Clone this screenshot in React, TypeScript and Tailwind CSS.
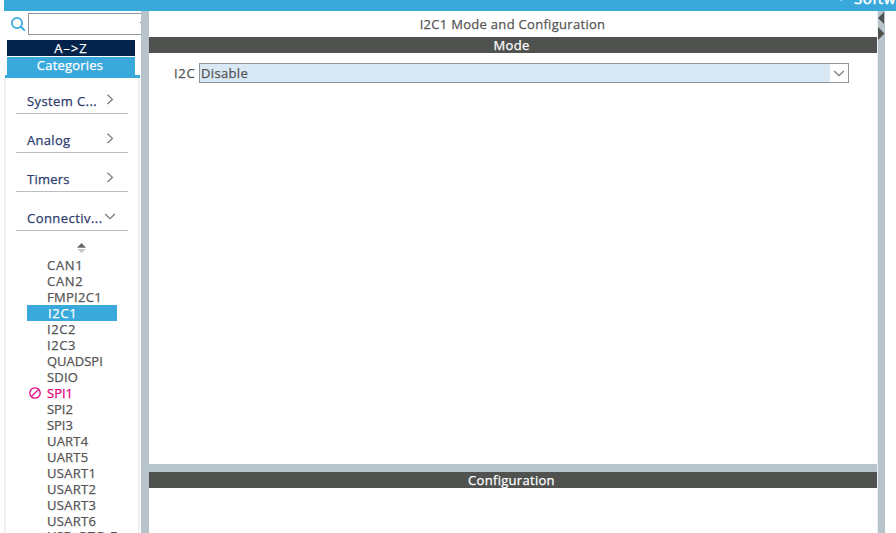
const categories = [
  { name: 'System C...', open: false, track: 'tracking-[0.4px]' },
  { name: 'Analog', open: false, track: 'tracking-[0.3px]' },
  { name: 'Timers', open: false, track: 'tracking-[0.25px]' },
  { name: 'Connectiv...', open: true, track: 'tracking-[0.45px]' },
];

const peripherals = [
  { name: 'CAN1', track: 'tracking-[0.7px]' },
  { name: 'CAN2', track: 'tracking-[0.7px]' },
  { name: 'FMPI2C1', track: 'tracking-[0.3px]' },
  { name: 'I2C1', track: 'tracking-[0.7px]' },
  { name: 'I2C2', track: 'tracking-[0.6px]' },
  { name: 'I2C3', track: 'tracking-[0.6px]' },
  { name: 'QUADSPI', track: 'tracking-[0px]' },
  { name: 'SDIO', track: 'tracking-[0.2px]' },
  { name: 'SPI1', track: 'tracking-[0px]' },
  { name: 'SPI2', track: 'tracking-[-0.05px]' },
  { name: 'SPI3', track: 'tracking-[-0.05px]' },
  { name: 'UART4', track: 'tracking-[0.2px]' },
  { name: 'UART5', track: 'tracking-[0.2px]' },
  { name: 'USART1', track: 'tracking-[0.3px]' },
  { name: 'USART2', track: 'tracking-[0.3px]' },
  { name: 'USART3', track: 'tracking-[0.3px]' },
  { name: 'USART6', track: 'tracking-[0.3px]' },
  { name: 'USB_OTG_F', track: 'tracking-[0px] -mt-px' },
];

function Chevron({ open = false }: { open?: boolean }) {
  return (
    <svg width="12" height="12" viewBox="0 0 12 12" fill="none" stroke="#777" strokeWidth="1.2">
      <path d={open ? 'M1.2 4 6 8.6 10.8 4' : 'M3.5 1.8 8.4 6.4 3.5 11'} />
    </svg>
  );
}

function Peripheral({ name, track }: { name: string; track: string }) {
  const selected = name === 'I2C1';
  const blocked = name === 'SPI1';
  const color = selected ? 'bg-[#39a9dc] text-white pl-px' : blocked ? 'text-[#e6007e]' : 'text-[#555]';
  return (
    <li className={`flex h-4 w-[90px] shrink-0 items-center whitespace-nowrap leading-4 ${color} ${track}`}>
      <span className="flex w-5 shrink-0 items-center pl-[2px]">
        {blocked && (
          <svg width="12" height="12" viewBox="0 0 12 12" fill="none" stroke="#e6007e" strokeWidth="1.3">
            <circle cx="6" cy="6" r="5.2" />
            <path d="M2.4 9.6 9.6 2.4" />
          </svg>
        )}
      </span>
      {name}
    </li>
  );
}

function Sidebar() {
  return (
    <aside className="flex w-[141px] shrink-0 flex-col overflow-hidden">
      <div className="flex h-[29px] shrink-0 pl-[10px] pt-[2px]">
        <svg className="mt-[3px] shrink-0" width="18" height="17" viewBox="0 0 18 17" fill="none" stroke="#39a9dc" strokeWidth="1.7">
          <circle cx="7" cy="7" r="5.1" />
          <path d="M10.7 10.7 14.8 14.6" strokeWidth="2" />
        </svg>
        <div className="h-[22px] w-[120px] shrink-0 border border-[#8d969c] bg-white pl-[111px] pt-2">
          <div className="h-px w-px bg-[#777]" />
        </div>
      </div>
      <div className="ml-[7px] h-4 w-32 shrink-0 bg-[#03234b] text-center leading-4 tracking-[1px] text-white">A–&gt;Z</div>
      <div className="ml-[7px] mt-px h-[18px] w-32 shrink-0 bg-[#39a9dc] pr-[2px] text-center leading-[17px] tracking-[0.2px] text-white">Categories</div>
      <div className="ml-[5px] h-[3px] w-[135px] shrink-0 bg-[#39a9dc]" />
      <div className="ml-1 flex w-[136px] min-h-0 flex-1 flex-col overflow-hidden border-x-2 border-[#f1f1f1] pl-[10px] pr-[10px]">
        {categories.map((c, i) => (
          <div key={c.name} className={`flex w-[112px] shrink-0 border-b border-[#b5c0c9] pl-[11px] text-[#2c3c6c] ${i === 0 ? 'h-9 pt-[15px]' : 'h-[39px] pt-[18px]'}`}>
            <span className={`w-[77px] whitespace-nowrap leading-4 ${c.track}`}>{c.name}</span>
            <Chevron open={c.open} />
          </div>
        ))}
        <svg className="ml-[61px] mt-3 shrink-0" width="9" height="10" viewBox="0 0 9 10">
          <path d="M0 4.7 4.5 0 9 4.7Z" fill="#666" />
          <path d="M0 6 4.5 10 9 6Z" fill="#c8c8c8" />
        </svg>
        <ul className="ml-[11px] mt-1 flex flex-col">
          {peripherals.map((p) => <Peripheral key={p.name} {...p} />)}
        </ul>
      </div>
    </aside>
  );
}

function TitleBar({ title }: { title: string }) {
  return <div className="h-4 shrink-0 bg-[#505250] pr-[3px] text-center leading-4 tracking-[0.3px] text-white">{title}</div>;
}

export default function App() {
  return (
    <div className="flex h-[533px] w-[896px] flex-col overflow-hidden bg-white font-['Open_Sans','Noto_Sans',sans-serif] text-[13px] text-[#555] [-webkit-text-stroke-width:0.25px]">
      <header className="relative ml-1 h-[11px] shrink-0 overflow-hidden bg-[#39a9dc] text-white">
        <span className="absolute left-[836px] top-0 h-px w-[2px] bg-[#8fcdec]" />
        <span className="absolute left-[850px] top-[-12px] whitespace-nowrap text-[15px] leading-5 tracking-[0.5px] [-webkit-text-stroke-width:0.5px]">Softw</span>
      </header>
      <div className="flex min-h-0 flex-1">
        <Sidebar />
        <div className="w-2 shrink-0 bg-[#b8c4cb]" />
        <main className="flex w-[728px] shrink-0 flex-col">
          <h1 className="h-[26px] shrink-0 pr-px text-center leading-[27px] tracking-[0.3px]">I2C1 Mode and Configuration</h1>
          <TitleBar title="Mode" />
          <section className="flex h-[411px] shrink-0 pl-[25px] pt-[10px]">
            <label className="w-[25px] leading-5 tracking-[0.7px]">I2C</label>
            <div className="flex h-5 w-[650px] border border-[#8d969c] bg-[#d9e8f5]">
              <span className="flex-1 pl-[1px] leading-[19px] tracking-[0.35px]">Disable</span>
              <span className="flex w-[18px] items-center justify-center bg-white"><Chevron open /></span>
            </div>
          </section>
          <div className="h-2 shrink-0 bg-[#b8c4cb]" />
          <TitleBar title="Configuration" />
        </main>
        <div className="w-px shrink-0 bg-[#eef1f3]" />
        <div className="w-[7px] shrink-0 bg-[#b8c4cb]">
          <svg width="7" height="30" viewBox="0 0 7 30" fill="#505250">
            <path d="M6 1V13L0 7Z" />
            <path d="M0 16V29L6.5 22.5Z" />
          </svg>
        </div>
      </div>
    </div>
  );
}
